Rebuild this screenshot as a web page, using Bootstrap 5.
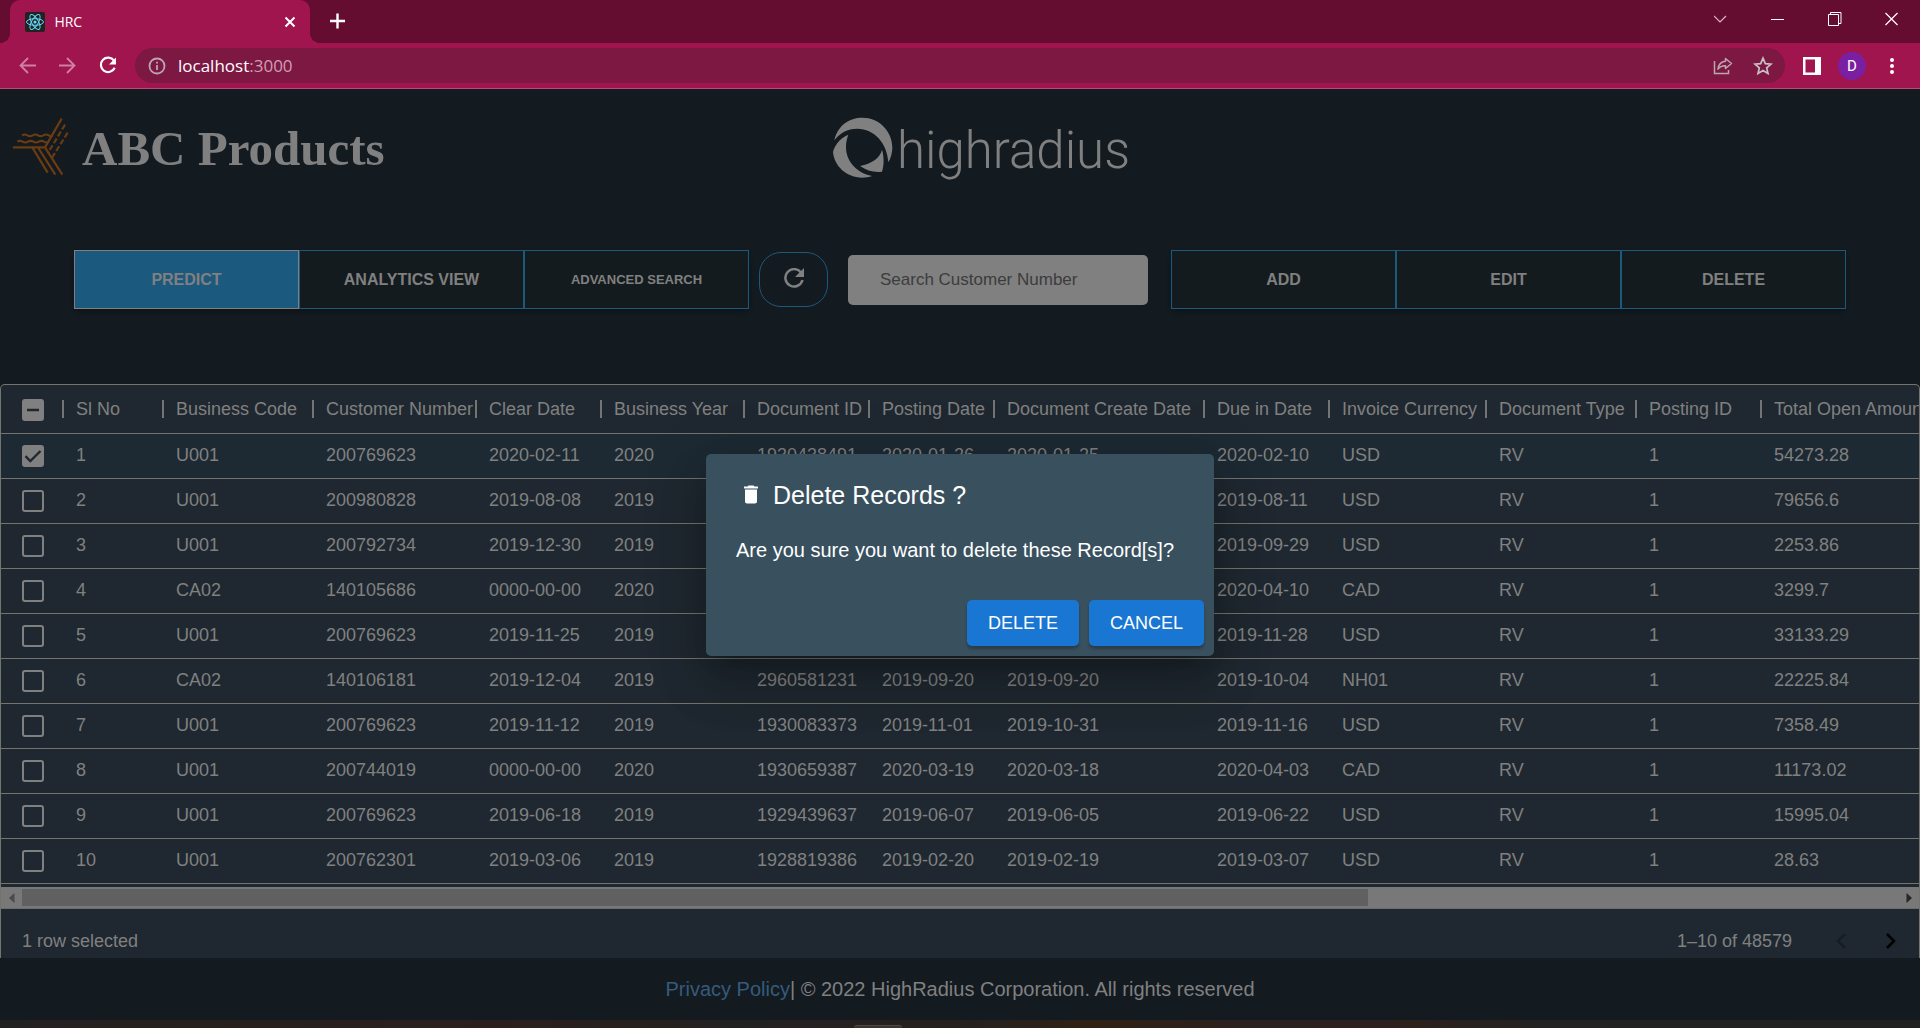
<!DOCTYPE html>
<html lang="en">
<head>
<meta charset="utf-8">
<meta name="viewport" content="width=device-width, initial-scale=1">
<title>HRC</title>
<link href="https://cdn.jsdelivr.net/npm/bootstrap@5.3.0/dist/css/bootstrap.min.css" rel="stylesheet">
<style>
  :root { --ink: #808080; --panel: #1f2830; --page: #131a20; --edge: #1c597f; }
  body { background: var(--page); color: var(--ink); font-family: "Liberation Sans", Arial, sans-serif; font-size: 18px; line-height: 24px; overflow: hidden; }
  svg { display: block; flex: none; }
  button { font-family: inherit; }

  /* browser window */
  .tab-strip { background: #650d31; height: 43px; padding-left: 10px; }
  .win-tab { position: relative; width: 300px; height: 43px; background: #a0154e; border-radius: 10px 10px 0 0; padding: 0 13px 0 15px; color: #fff; font: 14px/20px "Open Sans", sans-serif; }
  .win-tab::before, .win-tab::after { content: ""; position: absolute; bottom: 0; width: 10px; height: 10px; }
  .win-tab::before { left: -10px; background: radial-gradient(circle at 0 0, transparent 10px, #a0154e 10px); }
  .win-tab::after { right: -10px; background: radial-gradient(circle at 100% 0, transparent 10px, #a0154e 10px); }
  .plain-btn { background: none; border: 0; padding: 0; color: #fff; display: flex; align-items: center; justify-content: center; }
  .win-btn { width: 57px; height: 37px; }
  .nav-strip { background: #a0154e; height: 46px; border-bottom: 1px solid #b84a78; padding: 0 8px; }
  .nav-btn { width: 40px; height: 32px; }
  .address-bar { background: #7c1842; height: 35px; border-radius: 18px; padding: 0 2px 0 13px; margin: 0 7px; }
  .url-text { color: #fff; font: 17px/24px "Open Sans", sans-serif; }
  .url-text span { color: #cf9fb4; }
  .avatar-dot { width: 28px; height: 28px; border-radius: 50%; background: #7b1fa2; color: #fff; font: 15px/28px Roboto, sans-serif; }

  /* page head */
  .page-head { height: 161px; padding-top: 28px; }
  .brand-name { font: bold 49px/64px "Liberation Serif", "Times New Roman", serif; color: var(--ink); }
  .logo-word { font: 300 51px/68px Roboto, sans-serif; color: var(--ink); }
  .tool-row { padding: 0 74px; margin-bottom: 75px; }
  .tool-row .btn-group { flex: 1 1 0; box-shadow: 0 3px 5px rgba(0,0,0,.25); }
  .tool-row .btn-group .btn { flex: 1 1 0; height: 59px; border-radius: 0; border: 1px solid var(--edge); background: #141b1e; color: var(--ink); font-size: 16px; font-weight: bold; padding: 0; }
  .tool-row .btn-group > .btn:not(:first-child) { margin-left: 0; }
  .tool-row .btn-group .btn.btn-lit { background: var(--edge); border-color: #808080; }
  .tool-row .btn-group .btn.btn-thin { font-size: 13px; }
  .refresh-btn { width: 69px; height: 55px; border: 1px solid var(--edge); border-radius: 22px; margin: 0 20px 0 10px; }
  .search-box { width: 300px; height: 50px; border: 0; border-radius: 5px; background: #808080; padding: 0 32px; font-size: 17px; margin-right: 23px; }
  .search-box::placeholder { color: #3c3c3c; opacity: 1; }

  /* records grid */
  .grid-panel { background: var(--panel); border: 1px solid #74746f; border-bottom: 0; border-radius: 5px 5px 0 0; }
  .grid-clip { overflow: hidden; padding-bottom: 3px; }
  .record-table { --bs-table-bg: transparent; table-layout: fixed; width: 1960px; border-collapse: separate; border-spacing: 0; margin: 0; color: var(--ink); }
  .record-table > :not(caption) > * > * { padding: 0 0 2px 12px; height: 45px; border-bottom: 1px solid #74746f; white-space: nowrap; vertical-align: middle; color: var(--ink); font-weight: normal; }
  .record-table thead > tr > th { height: 49px; padding-bottom: 0; }
  .record-table th:not(:last-child) { background: linear-gradient(#747474, #747474) right center / 2px 18px no-repeat; }
  .record-table tr > :first-child { padding-left: 21px; }
  .picked-row { background: #1d2a33; }
  .record-table .form-check-input { width: 22px; height: 22px; margin: 2px 0 0; border: 2px solid var(--ink); border-radius: 3px; background-color: transparent; display: block; float: none; }
  .record-table .form-check-input:checked, .record-table .form-check-input:indeterminate { background-color: var(--ink); border-color: var(--ink); background-size: 18px 18px; }
  .record-table .form-check-input:checked { background-image: url("data:image/svg+xml,%3csvg xmlns='http://www.w3.org/2000/svg' viewBox='0 0 18 18'%3e%3cpath d='M1.500 9.200l4.800 4.800L16.500 4' fill='none' stroke='%231f2830' stroke-width='2.400'/%3e%3c/svg%3e"); }
  .record-table .form-check-input:indeterminate { background-image: url("data:image/svg+xml,%3csvg xmlns='http://www.w3.org/2000/svg' viewBox='0 0 18 18'%3e%3cpath d='M3 9h12' fill='none' stroke='%231f2830' stroke-width='2.400'/%3e%3c/svg%3e"); }
  .scroll-track { height: 22px; background: #787878; border-bottom: 1px solid #6c6c6c; padding: 2px 0; }
  .scroll-track .plain-btn { width: 21px; }
  .scroll-thumb { background: #606060; height: 17px; }
  .grid-foot { height: 49px; padding: 14px 3px 0 21px; }
  .page-btn { width: 50px; height: 30px; }

  .site-foot { height: 62px; font-size: 20px; }
  .site-foot a { color: #365a7c; text-decoration: none; }
  .task-edge { height: 8px; padding-right: 164px; background: linear-gradient(90deg, #232120, #2b1f1b 26%, #232120 38%, #25201e 50%, #302114 57%, #2a201d 65%, #2c201b 74%, #232220 80%, #222120); }
  .task-nub { width: 48px; height: 3px; background: #383431; border-top: 1px solid #504b47; border-radius: 4px 4px 0 0; }

  /* confirm dialog */
  .ask-layer { position: absolute; inset: 0; z-index: 5; }
  .ask-card { width: 508px; background: #39505f; color: #fff; border-radius: 5px; box-shadow: 0 14px 19px -9px rgba(0,0,0,.2), 0 30px 48px 4px rgba(0,0,0,.14), 0 11px 58px 10px rgba(0,0,0,.12); padding: 23px 10px 10px; }
  .ask-title { font-size: 25px; line-height: 36px; font-weight: normal; margin: 0; padding-left: 23px; gap: 10px; }
  .ask-text { font-size: 20px; line-height: 30px; padding: 22px 20px 35px; margin: 0; white-space: nowrap; }
  .ask-row { gap: 10px; }
  .ask-btn { height: 46px; padding: 0 21px; border: 0; border-radius: 5px; background: #1976d2; color: #fff; font-size: 18px; box-shadow: 0 3px 3px rgba(0,0,0,.25); }
</style>
</head>
<body>
<div class="d-flex flex-column min-vh-100">

  <div class="tab-strip d-flex">
    <div class="win-tab d-flex align-items-center">
      <svg width="20" height="20" viewBox="0 0 20 20"><rect width="20" height="20" rx="2" fill="#222"/><g fill="none" stroke="#61dafb" stroke-width="1"><ellipse cx="10" cy="10" rx="8.500" ry="3.300"/><ellipse cx="10" cy="10" rx="8.500" ry="3.300" transform="rotate(60 10 10)"/><ellipse cx="10" cy="10" rx="8.500" ry="3.300" transform="rotate(120 10 10)"/></g><circle cx="10" cy="10" r="1.600" fill="#61dafb"/></svg>
      <span class="ms-2 flex-grow-1">&#8202;HRC</span>
      <button class="plain-btn" aria-label="Close tab"><svg width="14" height="14" viewBox="0 0 14 14" stroke="#fff" stroke-width="2"><path d="M2.500 2.500l9 9M11.500 2.500l-9 9"/></svg></button>
    </div>
    <button class="plain-btn ms-3" aria-label="New tab"><svg width="21" height="43" viewBox="0 0 21 43" stroke="#fff" stroke-width="2.400"><path d="M4 21h15M11.500 13.500v15"/></svg></button>
    <div class="ms-auto d-flex">
      <button class="plain-btn win-btn" aria-label="Search tabs"><svg width="14" height="14" viewBox="0 0 14 14" fill="none" stroke="#d9b8c6" stroke-width="1.200"><path d="M0 4l6 6 6-6"/></svg></button>
      <button class="plain-btn win-btn" aria-label="Minimize"><svg width="14" height="14" viewBox="0 0 14 14" stroke="#fff"><path d="M0 7.500h13"/></svg></button>
      <button class="plain-btn win-btn" aria-label="Restore"><svg width="14" height="14" viewBox="0 0 14 14" fill="none" stroke="#fff"><path d="M.5 2.500h10v11H.5zM2.500 2.500v-2h10.500v11h-2.500"/></svg></button>
      <button class="plain-btn win-btn" aria-label="Close"><svg width="14" height="14" viewBox="0 0 14 14" stroke="#fff" stroke-width="1.200"><path d="M.5 1l12 12M12.500 1l-12 12"/></svg></button>
    </div>
  </div>

  <div class="nav-strip d-flex align-items-center">
    <button class="plain-btn nav-btn" aria-label="Back"><svg width="18" height="18" viewBox="0 0 18 18" fill="none" stroke="#cf7fa1" stroke-width="1.800"><path d="M17 8.500H2M9 1L1.500 8.500 9 16"/></svg></button>
    <button class="plain-btn nav-btn" aria-label="Forward"><svg width="18" height="18" viewBox="0 0 18 18" fill="none" stroke="#cf7fa1" stroke-width="1.800"><path d="M0 8.500h15M8 1l7.500 7.500L8 16"/></svg></button>
    <button class="plain-btn nav-btn" aria-label="Reload"><svg width="20" height="20" viewBox="0 0 20 20" fill="none" stroke="#fff" stroke-width="2.200"><path d="M16 4.700A7.200 7.200 0 1 0 16.700 11.800"/><path d="M18 1.500v7h-7z" fill="#fff" stroke="none"/></svg></button>
    <div class="address-bar d-flex align-items-center flex-grow-1">
      <svg width="18" height="18" viewBox="0 0 18 18" fill="none" stroke="#b9a7b2" stroke-width="1.800"><circle cx="9" cy="9" r="7.500"/><path d="M9 8v5M9 4.800v1.800"/></svg>
      <div class="url-text ms-2 ps-1 flex-grow-1">localhost<span>:3000</span></div>
      <button class="plain-btn nav-btn" aria-label="Share"><svg width="20" height="20" viewBox="0 0 20 20" fill="none" stroke="#b9a7ae" stroke-width="1.500"><path d="M1.500 5v12.500h14V14"/><path d="M12.500 2.500l6 5-6 5V9.700C9 9.500 6.700 10.700 5 13.200 5.400 8.800 8 5.800 12.500 5.300z" stroke-linejoin="round"/></svg></button>
      <button class="plain-btn nav-btn" aria-label="Bookmark"><svg width="20" height="20" viewBox="0 0 20 20" fill="none" stroke="#c9c0c4" stroke-width="1.700"><path d="M10 2.200l2.300 5.400 5.800.5-4.400 3.800 1.300 5.700-5-3-5 3 1.300-5.700L1.900 8.100l5.800-.5z"/></svg></button>
    </div>
    <button class="plain-btn nav-btn" aria-label="Side panel"><svg width="18" height="18" viewBox="0 0 18 18"><path d="M0 0h18v18H0zM2.500 2.500v13H12v-13z" fill="#fff" fill-rule="evenodd"/></svg></button>
    <button class="plain-btn nav-btn" aria-label="Profile"><span class="avatar-dot">D</span></button>
    <button class="plain-btn nav-btn" aria-label="Menu"><svg width="4" height="18" viewBox="0 0 4 18" fill="#fff"><circle cx="2" cy="3" r="2"/><circle cx="2" cy="9" r="2"/><circle cx="2" cy="15" r="2"/></svg></button>
  </div>

  <main class="position-relative flex-grow-1">
    <header class="page-head row g-0">
      <div class="col-5 d-flex align-items-start">
        <svg class="ms-2" width="66" height="60" viewBox="24 350 198 180" fill="none" stroke="#6b3c12" stroke-width="6.500">
          <path d="M39 441h96L185 355M135 441l52 82M115 443l51 80M98 443l45 74"/>
          <path d="M66 405q8-5 16 0t16 0 16 0 16 0 16 0 12 0M52 424q8-5 16 0t16 0 16 0 16 0 16 0 14 0"/>
          <path d="M195 373l-52 86M203 397l-50 80" stroke-dasharray="17 7"/>
        </svg>
        <h1 class="brand-name mb-0 ms-2">ABC Products</h1>
      </div>
      <div class="col-7 d-flex align-items-start ps-4">
        <svg class="ms-2" width="61" height="62" viewBox="96 82 183 186" fill="#808080">
          <path d="M103 152C112 108 148 84 187 84c50 0 90 40 90 90 0 16-5 32-12 44C262 160 222 117 172 117c-30 0-52 13-69 35z"/>
          <path d="M145 135C115 148 102 172 99 188c4 42 41 76 87 76 12 0 22-2 30-5-46-9-78-44-78-87 0-14 3-26 7-37z"/>
          <path d="M246 180c-6 25-31 42-66 49 20 14 42 20 66 17 7-21 6-46 0-66z"/>
        </svg>
        <span class="logo-word ms-1">highradius</span>
      </div>
    </header>

    <div class="tool-row d-flex align-items-center">
      <div class="btn-group">
        <button class="btn btn-lit">PREDICT</button>
        <button class="btn">ANALYTICS VIEW</button>
        <button class="btn btn-thin">ADVANCED SEARCH</button>
      </div>
      <button class="plain-btn refresh-btn" aria-label="Refresh"><svg width="22" height="24" viewBox="0 0 22 24" fill="none" stroke="#808080" stroke-width="2.500"><path d="M18 4.500A8.700 8.700 0 1 0 19.500 12"/><path d="M21 0v9h-9z" fill="#808080" stroke="none"/></svg></button>
      <input class="search-box" type="text" placeholder="Search Customer Number" aria-label="Search Customer Number">
      <div class="btn-group">
        <button class="btn">ADD</button>
        <button class="btn">EDIT</button>
        <button class="btn">DELETE</button>
      </div>
    </div>

    <section class="grid-panel">
      <div class="grid-clip">
        <table class="table record-table">
          <colgroup>
            <col style="width:63px"><col style="width:100px"><col style="width:150px"><col style="width:163px"><col style="width:125px"><col style="width:143px"><col style="width:125px"><col style="width:125px"><col style="width:210px"><col style="width:125px"><col style="width:157px"><col style="width:150px"><col style="width:125px"><col>
          </colgroup>
          <thead>
            <tr><th><input class="form-check-input" id="pickAll" type="checkbox" aria-label="Select all rows"></th><th>Sl No</th><th>Business Code</th><th>Customer Number</th><th>Clear Date</th><th>Business Year</th><th>Document ID</th><th>Posting Date</th><th>Document Create Date</th><th>Due in Date</th><th>Invoice Currency</th><th>Document Type</th><th>Posting ID</th><th>Total Open Amount</th></tr>
          </thead>
          <tbody>
            <tr class="picked-row"><td><input class="form-check-input" type="checkbox" checked aria-label="Select row 1"></td><td>1</td><td>U001</td><td>200769623</td><td>2020-02-11</td><td>2020</td><td>1930438491</td><td>2020-01-26</td><td>2020-01-25</td><td>2020-02-10</td><td>USD</td><td>RV</td><td>1</td><td>54273.28</td></tr>
            <tr><td><input class="form-check-input" type="checkbox" aria-label="Select row 2"></td><td>2</td><td>U001</td><td>200980828</td><td>2019-08-08</td><td>2019</td><td></td><td></td><td></td><td>2019-08-11</td><td>USD</td><td>RV</td><td>1</td><td>79656.6</td></tr>
            <tr><td><input class="form-check-input" type="checkbox" aria-label="Select row 3"></td><td>3</td><td>U001</td><td>200792734</td><td>2019-12-30</td><td>2019</td><td></td><td></td><td></td><td>2019-09-29</td><td>USD</td><td>RV</td><td>1</td><td>2253.86</td></tr>
            <tr><td><input class="form-check-input" type="checkbox" aria-label="Select row 4"></td><td>4</td><td>CA02</td><td>140105686</td><td>0000-00-00</td><td>2020</td><td></td><td></td><td></td><td>2020-04-10</td><td>CAD</td><td>RV</td><td>1</td><td>3299.7</td></tr>
            <tr><td><input class="form-check-input" type="checkbox" aria-label="Select row 5"></td><td>5</td><td>U001</td><td>200769623</td><td>2019-11-25</td><td>2019</td><td></td><td></td><td></td><td>2019-11-28</td><td>USD</td><td>RV</td><td>1</td><td>33133.29</td></tr>
            <tr><td><input class="form-check-input" type="checkbox" aria-label="Select row 6"></td><td>6</td><td>CA02</td><td>140106181</td><td>2019-12-04</td><td>2019</td><td>2960581231</td><td>2019-09-20</td><td>2019-09-20</td><td>2019-10-04</td><td>NH01</td><td>RV</td><td>1</td><td>22225.84</td></tr>
            <tr><td><input class="form-check-input" type="checkbox" aria-label="Select row 7"></td><td>7</td><td>U001</td><td>200769623</td><td>2019-11-12</td><td>2019</td><td>1930083373</td><td>2019-11-01</td><td>2019-10-31</td><td>2019-11-16</td><td>USD</td><td>RV</td><td>1</td><td>7358.49</td></tr>
            <tr><td><input class="form-check-input" type="checkbox" aria-label="Select row 8"></td><td>8</td><td>U001</td><td>200744019</td><td>0000-00-00</td><td>2020</td><td>1930659387</td><td>2020-03-19</td><td>2020-03-18</td><td>2020-04-03</td><td>CAD</td><td>RV</td><td>1</td><td>11173.02</td></tr>
            <tr><td><input class="form-check-input" type="checkbox" aria-label="Select row 9"></td><td>9</td><td>U001</td><td>200769623</td><td>2019-06-18</td><td>2019</td><td>1929439637</td><td>2019-06-07</td><td>2019-06-05</td><td>2019-06-22</td><td>USD</td><td>RV</td><td>1</td><td>15995.04</td></tr>
            <tr><td><input class="form-check-input" type="checkbox" aria-label="Select row 10"></td><td>10</td><td>U001</td><td>200762301</td><td>2019-03-06</td><td>2019</td><td>1928819386</td><td>2019-02-20</td><td>2019-02-19</td><td>2019-03-07</td><td>USD</td><td>RV</td><td>1</td><td>28.63</td></tr>
          </tbody>
        </table>
      </div>
      <div class="scroll-track d-flex align-items-center">
        <button class="plain-btn" aria-label="Scroll left"><svg width="6" height="10" viewBox="0 0 6 10" fill="#4a4a4a"><path d="M5.500 0v10L0 5z"/></svg></button>
        <div class="flex-grow-1"><div class="scroll-thumb" style="width:71.75%"></div></div>
        <button class="plain-btn" aria-label="Scroll right"><svg width="6" height="10" viewBox="0 0 6 10" fill="#262626"><path d="M.5 0v10L6 5z"/></svg></button>
      </div>
      <div class="grid-foot d-flex justify-content-between align-items-center">
        <span>1 row selected</span>
        <div class="d-flex align-items-center">
          <span class="me-4">1–10 of 48579</span>
          <button class="plain-btn page-btn" aria-label="Previous page"><svg width="10" height="16" viewBox="0 0 10 16" fill="none" stroke="#161c22" stroke-width="2.400"><path d="M9 1L2 8l7 7"/></svg></button>
          <button class="plain-btn page-btn" aria-label="Next page"><svg width="10" height="16" viewBox="0 0 10 16" fill="none" stroke="#000" stroke-width="2.600"><path d="M1 1l7 7-7 7"/></svg></button>
        </div>
      </div>
    </section>

    <footer class="site-foot d-flex align-items-center justify-content-center"><div><a href="#">Privacy Policy</a>| © 2022 HighRadius Corporation. All rights reserved</div></footer>

    <div class="ask-layer d-flex align-items-center justify-content-center">
      <div class="ask-card" role="dialog" aria-labelledby="askTitle">
        <h2 class="ask-title d-flex align-items-center" id="askTitle"><svg width="24" height="25" viewBox="0 0 24 24" fill="#fff"><path d="M6 19c0 1.100.9 2 2 2h8c1.100 0 2-.9 2-2V7H6v12zM19 4h-3.500l-1-1h-5l-1 1H5v2h14V4z"/></svg>Delete Records ?</h2>
        <p class="ask-text">Are you sure you want to delete these Record[s]?</p>
        <div class="ask-row d-flex justify-content-end">
          <button class="ask-btn">DELETE</button>
          <button class="ask-btn">CANCEL</button>
        </div>
      </div>
    </div>
  </main>

  <div class="task-edge d-flex align-items-end justify-content-center"><div class="task-nub"></div></div>
</div>
<script src="https://cdn.jsdelivr.net/npm/bootstrap@5.3.0/dist/js/bootstrap.bundle.min.js"></script>
<script>document.getElementById('pickAll').indeterminate = true;</script>
</body>
</html>
